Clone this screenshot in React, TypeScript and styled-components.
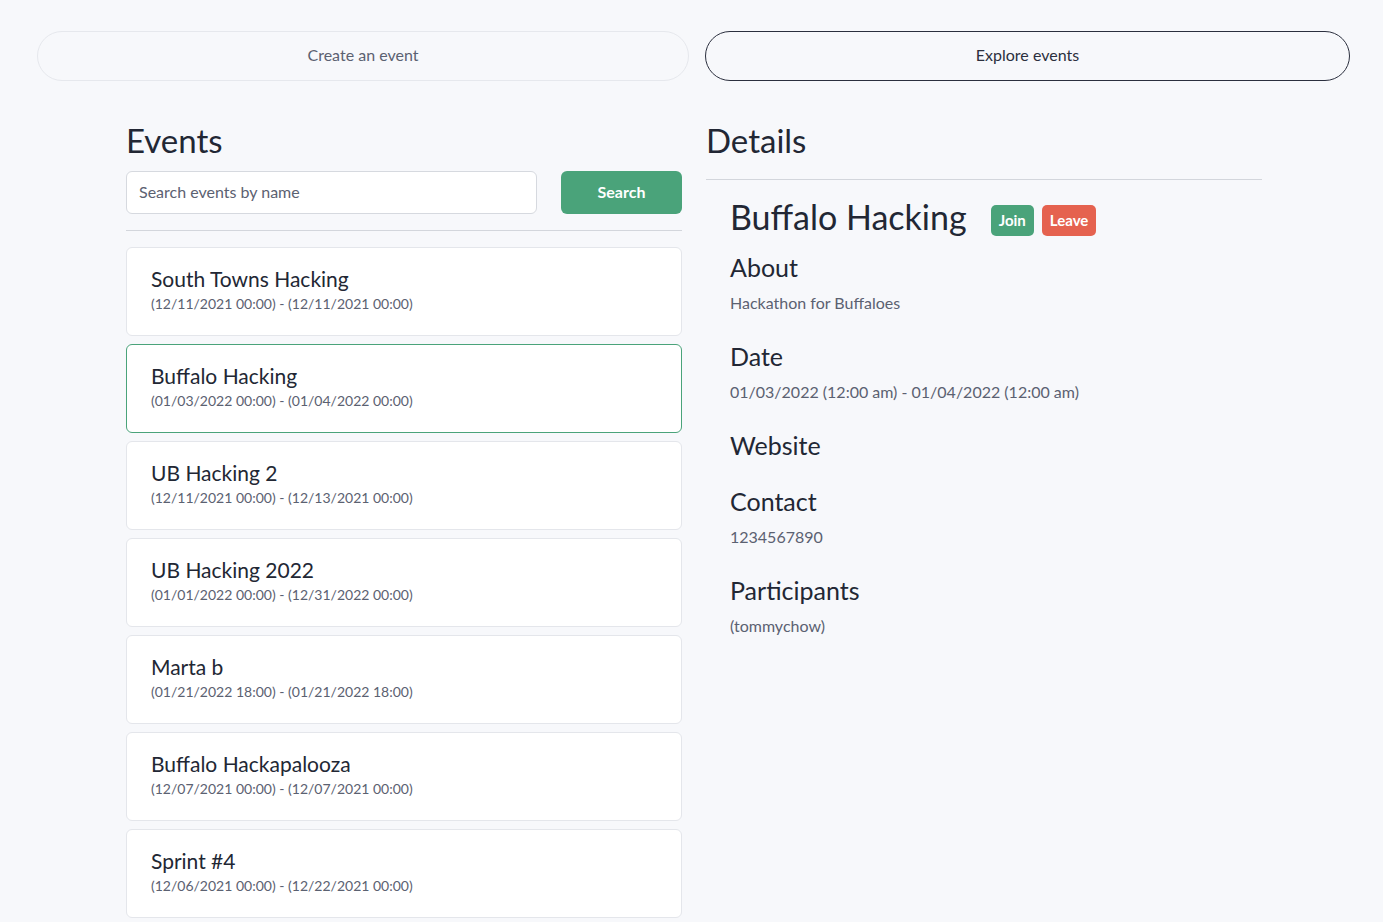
import React from "react";
import styled, { createGlobalStyle } from "styled-components";

const Global = createGlobalStyle`
  html, body { margin: 0; padding: 0; background: #f7f8fb; }
  body { font-family: "Lato", "Noto Sans", sans-serif; color: #222734; }
  * { box-sizing: border-box; }
`;

const Page = styled.div`
  min-height: 922px;
  padding: 31px 33px 0 37px;
`;

const TopBar = styled.div`
  display: grid;
  grid-template-columns: 652px 645px;
  gap: 16px;
`;

const PillButton = styled.button<{ $active?: boolean }>`
  height: 50px;
  padding: 0 0 4px;
  border-radius: 25px;
  background: transparent;
  border: 1px solid ${(p) => (p.$active ? "#2b2f3e" : "#e6e8ed")};
  color: ${(p) => (p.$active ? "#2b2f3e" : "#5b6171")};
  font-family: inherit;
  font-size: 16px;
  cursor: pointer;
`;

const Main = styled.div`
  display: grid;
  grid-template-columns: 556px 556px;
  gap: 24px;
  margin: 40px 0 0 89px;
`;

const Column = styled.div`
  display: flex;
  flex-direction: column;
`;

const PageTitle = styled.h2`
  margin: 0;
  font-size: 33px;
  line-height: 38px;
  font-weight: 400;
  color: #222734;
`;

const SearchRow = styled.div`
  display: flex;
  gap: 24px;
  margin-top: 12px;
`;

const SearchInput = styled.input`
  flex: 1;
  height: 43px;
  border: 1px solid #d6d9df;
  border-radius: 6px;
  background: #fff;
  padding: 0 12px 2px;
  font-family: inherit;
  font-size: 16px;
  color: #222734;
  &::placeholder { color: #5b6171; }
`;

const SearchButton = styled.button`
  width: 121px;
  height: 43px;
  padding: 0 0 2px;
  border: none;
  border-radius: 6px;
  background: #4aa37a;
  color: #fff;
  font-family: inherit;
  font-size: 16px;
  font-weight: 700;
`;

const Rule = styled.hr<{ $mt: number; $mb: number }>`
  border: none;
  border-top: 1px solid #d3d6dc;
  margin: ${(p) => p.$mt}px 0 ${(p) => p.$mb}px;
`;

const List = styled.div`
  display: flex;
  flex-direction: column;
  gap: 8px;
`;

const Card = styled.div<{ $selected?: boolean }>`
  background: #fff;
  border: 1px solid ${(p) => (p.$selected ? "#4aa37a" : "#e4e6eb")};
  border-radius: 6px;
  padding: 19px 24px 21px;
`;

const CardTitle = styled.div`
  font-size: 21px;
  line-height: 24px;
  color: #222734;
  margin-bottom: 2px;
`;

const CardDate = styled.div`
  font-size: 14px;
  line-height: 21px;
  color: #5b6171;
`;

const DetailBody = styled.div`
  padding: 0 24px;
`;

const EventHeader = styled.div`
  display: flex;
  align-items: center;
  gap: 8px;
  margin-bottom: 17px;
`;

const EventName = styled.h1`
  margin: 0 16px 0 0;
  font-size: 34px;
  line-height: 38px;
  font-weight: 400;
  color: #222734;
`;

const Badge = styled.span<{ $tone: "join" | "leave" }>`
  display: inline-flex;
  align-items: center;
  height: 31px;
  margin-top: 6px;
  padding: 0 8px 1px;
  border-radius: 5px;
  background: ${(p) => (p.$tone === "join" ? "#4aa37a" : "#e5624f")};
  color: #fff;
  font-size: 15px;
  font-weight: 700;
`;

const Section = styled.div`
  padding-bottom: 27px;
`;

const SectionTitle = styled.h4`
  margin: 0;
  font-size: 25px;
  line-height: 29px;
  font-weight: 400;
  color: #222734;
`;

const SectionText = styled.p`
  margin: 9px 0 0;
  font-size: 16px;
  line-height: 24px;
  color: #5b6171;
`;

const events = [
  { name: "South Towns Hacking", date: "(12/11/2021 00:00) - (12/11/2021 00:00)" },
  { name: "Buffalo Hacking", date: "(01/03/2022 00:00) - (01/04/2022 00:00)", selected: true },
  { name: "UB Hacking 2", date: "(12/11/2021 00:00) - (12/13/2021 00:00)" },
  { name: "UB Hacking 2022", date: "(01/01/2022 00:00) - (12/31/2022 00:00)" },
  { name: "Marta b", date: "(01/21/2022 18:00) - (01/21/2022 18:00)" },
  { name: "Buffalo Hackapalooza", date: "(12/07/2021 00:00) - (12/07/2021 00:00)" },
  { name: "Sprint #4", date: "(12/06/2021 00:00) - (12/22/2021 00:00)" },
];

const sections: { title: string; text?: string }[] = [
  { title: "About", text: "Hackathon for Buffaloes" },
  { title: "Date", text: "01/03/2022 (12:00 am) - 01/04/2022 (12:00 am)" },
  { title: "Website" },
  { title: "Contact", text: "1234567890" },
  { title: "Participants", text: "(tommychow)" },
];

export default function App() {
  return (
    <>
      <Global />
      <Page>
        <TopBar>
          <PillButton>Create an event</PillButton>
          <PillButton $active>Explore events</PillButton>
        </TopBar>
        <Main>
          <Column>
            <PageTitle>Events</PageTitle>
            <SearchRow>
              <SearchInput placeholder="Search events by name" />
              <SearchButton>Search</SearchButton>
            </SearchRow>
            <Rule $mt={16} $mb={16} />
            <List>
              {events.map((e) => (
                <Card key={e.name} $selected={e.selected}>
                  <CardTitle>{e.name}</CardTitle>
                  <CardDate>{e.date}</CardDate>
                </Card>
              ))}
            </List>
          </Column>
          <Column>
            <PageTitle>Details</PageTitle>
            <Rule $mt={20} $mb={18} />
            <DetailBody>
              <EventHeader>
                <EventName>Buffalo Hacking</EventName>
                <Badge $tone="join">Join</Badge>
                <Badge $tone="leave">Leave</Badge>
              </EventHeader>
              {sections.map((s) => (
                <Section key={s.title}>
                  <SectionTitle>{s.title}</SectionTitle>
                  {s.text && <SectionText>{s.text}</SectionText>}
                </Section>
              ))}
            </DetailBody>
          </Column>
        </Main>
      </Page>
    </>
  );
}
